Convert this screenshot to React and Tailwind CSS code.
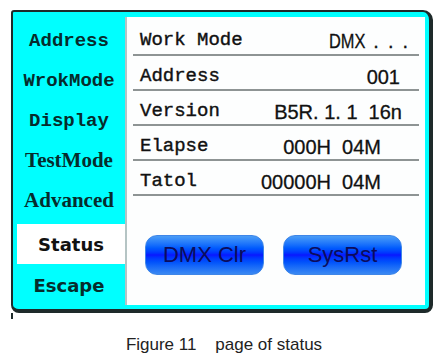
import React from "react";

const menu = [
  { label: "Address", font: "mono" },
  { label: "WrokMode", font: "mono" },
  { label: "Display", font: "mono" },
  { label: "TestMode", font: "serif" },
  { label: "Advanced", font: "serif" },
];

const rows = [
  { label: "Work Mode", value: "DMX", dots: true, pr: "pr-[2px]" },
  { label: "Address", value: "001", pr: "pr-[19px]" },
  { label: "Version", value: "B5R. 1. 1  16n", pr: "pr-[17px]" },
  { label: "Elapse", value: "000H  04M", pr: "pr-[38px]" },
  { label: "Tatol", value: "00000H  04M", pr: "pr-[38px]" },
];

const fontClass = {
  mono: "font-['Liberation_Mono',monospace] text-[19px] font-bold",
  serif: "font-['Liberation_Serif',serif] text-[21px] font-bold",
  sans: "font-['DejaVu_Sans',sans-serif] text-[18px] font-bold",
};

const BlueButton = ({ children }) => (
  <button className="w-[119px] h-[40px] rounded-[12px] border border-[#3f86e8] bg-linear-to-b from-[#4a9cf6] via-[#0a14ff] to-[#3a88f2] text-[22px] text-[#0c0c5c] font-['Liberation_Sans',sans-serif] leading-none">
    {children}
  </button>
);

export default function App() {
  return (
    <div className="w-[448px] h-[364px] bg-white">
      <div className="pt-[10px] pl-[11px]">
        <div className="w-[422px] h-[303px] flex bg-[#0ff] border-t-2 border-l-2 border-r-[4px] border-b-[4px] border-[#1e2a2a] rounded-tl-[3px] rounded-tr-[10px] rounded-b-[8px]">
          {/* side menu */}
          <div className="w-[112px] pt-[9px] flex flex-col text-[#062c2c]">
            {menu.map((m) => (
              <div key={m.label} className={`h-[40px] flex items-center justify-center ${fontClass[m.font]}`}>
                {m.label}
              </div>
            ))}
            <div className={`mt-[3px] ml-[4px] h-[40px] bg-white flex items-center justify-center text-[#111] ${fontClass.sans}`}>
              Status
            </div>
            <div className={`h-[42px] flex items-center justify-center ${fontClass.sans}`}>
              Escape
            </div>
          </div>

          {/* status panel */}
          <div className="flex-1 mt-[5px] mb-[4px] mr-[4px] bg-[#fdfefe] border-l-2 border-[#b5c4c4] px-[6px]">
            {rows.map((r, i) => (
              <div
                key={r.label}
                className={`${i === 0 ? "h-[39px] pt-[10px]" : "h-[35px] pt-[8px]"} flex items-center justify-between border-b-2 border-[#8e9494] text-[#111]`}
              >
                <span className="pl-[7px] font-['Liberation_Mono',monospace] text-[19px] [-webkit-text-stroke:0.4px_#111]">
                  {r.label}
                </span>
                <span className={`${r.pr} font-['Liberation_Sans',sans-serif] text-[20px] whitespace-pre [-webkit-text-stroke:0.3px_#111]`}>
                  {r.dots ? (
                    <>
                      <span className="inline-block scale-x-[0.82] origin-right">DMX</span>
                      <span className="ml-[8px] tracking-[9px]">...</span>
                    </>
                  ) : (
                    r.value
                  )}
                </span>
              </div>
            ))}
            <div className="mt-[39px] ml-[12px] flex gap-[19px]">
              <BlueButton>DMX Clr</BlueButton>
              <BlueButton>SysRst</BlueButton>
            </div>
          </div>
        </div>
        <div className="w-[2px] h-[6px] bg-[#1e2a2a]" />
      </div>
      <p className="mt-[13px] text-center text-[17px] text-[#222] font-['Liberation_Sans',sans-serif] whitespace-pre">
        {"Figure 11    page of status"}
      </p>
    </div>
  );
}
